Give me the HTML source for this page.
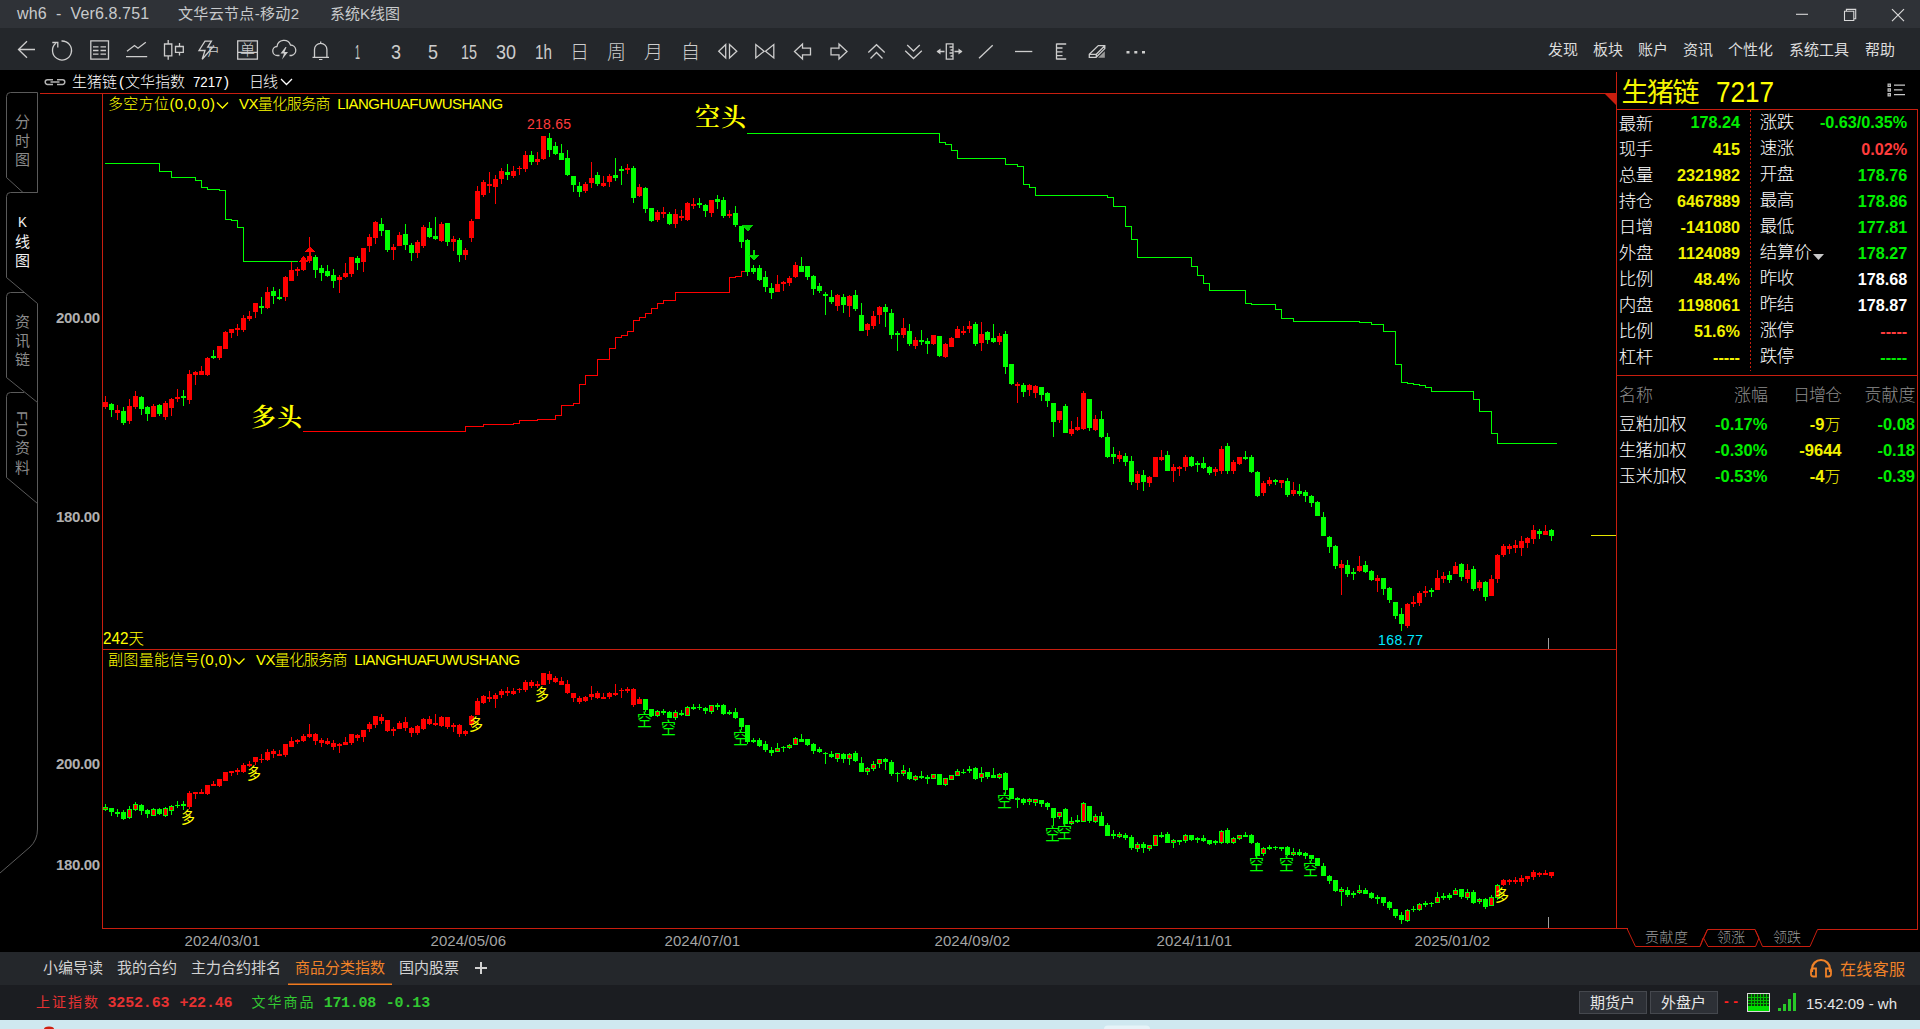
<!DOCTYPE html>
<html lang="zh-CN"><head><meta charset="utf-8"><title>wh6 - 系统K线图</title>
<style>
html,body{margin:0;padding:0;background:#000;}
body{width:1920px;height:1029px;overflow:hidden;position:relative;font-family:"Liberation Sans","Noto Sans CJK SC",sans-serif;}
.t{position:absolute;white-space:pre;}
.b{position:absolute;}
svg{position:absolute;left:0;top:0;}
</style></head>
<body>
<div class="b" style="left:0;top:0;width:1920px;height:28px;background:#2f3237"></div>
<div class="b" style="left:0;top:28px;width:1920px;height:42px;background:#24272b"></div>
<div class="b" style="left:0;top:952px;width:1920px;height:33px;background:#24272b"></div>
<div class="b" style="left:0;top:985px;width:1920px;height:35px;background:#1b1d21"></div>
<div class="b" style="left:0;top:1020px;width:1920px;height:9px;background:#cfe8f0"></div>
<div class="b" style="left:1579px;top:991px;width:66px;height:21px;background:#2d3036;border:1px solid #45484e;box-sizing:content-box"></div>
<div class="b" style="left:1650px;top:991px;width:66px;height:21px;background:#2d3036;border:1px solid #45484e;box-sizing:content-box"></div>
<svg class="chart" width="1920" height="1029" viewBox="0 0 1920 1029" shape-rendering="crispEdges"><path d="M40 93.5H1617M102.5 93V928M102 649.5H1617M102 928.5H1627.5M1616.5 72V928" stroke="#c81e0f" stroke-width="1" fill="none"/><path d="M105 163.5H159.5V171.5H171.5V177.5H195.5V180.5H201.5V187.5H207.5V189.5H219.5V190.5H225.5V219.5H231.5V220.5H237.5V227.5H243.5V261.5H298" stroke="#00ff00" fill="none"/><path d="M303 431.5H465.5V426.5H483.5V424.5H513.5V423.5H519.5V420.5H537.5V419.5H555.5V415.5H561.5V405.5H573.5V403.5H579.5V384.5H585.5V375.5H597.5V359.5H609.5V348.5H615.5V337.5H621.5V335.5H627.5V331.5H633.5V320.5H639.5V317.5H645.5V313.5H651.5V308.5H657.5V303.5H663.5V300.5H675.5V292.5H729.5V277.5H735.5V276.5H741.5V271.5H747" stroke="#ff0000" fill="none"/><path d="M747 133.5H939.5V142.5H945.5V144.5H951.5V150.5H957.5V158.5H1005.5V164.5H1017.5V166.5H1023.5V184.5H1029.5V187.5H1035.5V195.5H1107.5V197.5H1113.5V206.5H1125.5V226.5H1131.5V239.5H1137.5V257.5H1191.5V266.5H1197.5V275.5H1203.5V283.5H1209.5V290.5H1245.5V303.5H1251.5V304.5H1275.5V309.5H1281.5V318.5H1293.5V321.5H1359.5V322.5H1371.5V324.5H1383.5V331.5H1395.5V364.5H1401.5V382.5H1407.5V383.5H1413.5V384.5H1419.5V385.5H1425.5V387.5H1431.5V391.5H1473.5V399.5H1479.5V411.5H1491.5V433.5H1497.5V443.5H1557" stroke="#00ff00" fill="none"/><path fill="#ff0000" d="M105 396h1V409h-1zM103 402h5V407h-5z"/><path fill="#00ff00" d="M111 403h1V417h-1zM109 404h5V410h-5z"/><path fill="#ff0000" d="M117 405h1V420h-1zM115 410h5V413h-5z"/><path fill="#00ff00" d="M123 407h1V425h-1zM121 411h5V423h-5z"/><path fill="#ff0000" d="M129 399h1V424h-1zM127 406h5V421h-5z"/><path fill="#ff0000" d="M135 391h1V409h-1zM133 396h5V407h-5z"/><path fill="#00ff00" d="M141 396h1V415h-1zM139 397h5V409h-5z"/><path fill="#00ff00" d="M147 406h1V421h-1zM145 407h5V414h-5z"/><path fill="#ff0000" d="M153 404h1V417h-1zM151 406h5V417h-5z"/><path fill="#00ff00" d="M159 404h1V416h-1zM157 405h5V414h-5z"/><path fill="#ff0000" d="M165 401h1V420h-1zM163 403h5V417h-5z"/><path fill="#ff0000" d="M171 398h1V416h-1zM169 399h5V408h-5z"/><path fill="#ff0000" d="M177 389h1V402h-1zM175 397h5V399h-5z"/><path fill="#00ff00" d="M183 390h1V406h-1zM181 396h5V398h-5z"/><path fill="#ff0000" d="M189 370h1V404h-1zM187 374h5V400h-5z"/><path fill="#ff0000" d="M195 371h1V385h-1zM193 372h5V375h-5z"/><path fill="#ff0000" d="M201 366h1V375h-1zM199 371h5V375h-5z"/><path fill="#ff0000" d="M207 357h1V376h-1zM205 358h5V375h-5z"/><path fill="#00ff00" d="M213 350h1V359h-1zM211 356h5V358h-5z"/><path fill="#ff0000" d="M219 346h1V360h-1zM217 346h5V358h-5z"/><path fill="#ff0000" d="M225 331h1V349h-1zM223 332h5V349h-5z"/><path fill="#ff0000" d="M231 329h1V338h-1zM229 329h5V333h-5z"/><path fill="#ff0000" d="M237 324h1V336h-1zM235 328h5V330h-5z"/><path fill="#ff0000" d="M243 315h1V332h-1zM241 318h5V330h-5z"/><path fill="#ff0000" d="M249 311h1V321h-1zM247 316h5V319h-5z"/><path fill="#ff0000" d="M255 303h1V318h-1zM253 303h5V312h-5z"/><path fill="#00ff00" d="M261 297h1V314h-1zM259 306h5V308h-5z"/><path fill="#ff0000" d="M267 287h1V309h-1zM265 292h5V308h-5z"/><path fill="#00ff00" d="M273 287h1V304h-1zM271 291h5V296h-5z"/><path fill="#00ff00" d="M279 289h1V300h-1zM277 297h5V299h-5z"/><path fill="#ff0000" d="M285 276h1V301h-1zM283 277h5V297h-5z"/><path fill="#ff0000" d="M291 262h1V281h-1zM289 270h5V281h-5z"/><path fill="#ff0000" d="M297 267h1V276h-1zM295 269h5V271h-5z"/><path fill="#ff0000" d="M303 256h1V271h-1zM301 260h5V270h-5z"/><path fill="#ff0000" d="M309 237h1V263h-1zM307 256h5V261h-5z"/><path fill="#00ff00" d="M315 255h1V278h-1zM313 257h5V270h-5z"/><path fill="#00ff00" d="M321 265h1V281h-1zM319 268h5V273h-5z"/><path fill="#00ff00" d="M327 265h1V277h-1zM325 271h5V276h-5z"/><path fill="#00ff00" d="M333 269h1V288h-1zM331 275h5V281h-5z"/><path fill="#ff0000" d="M339 275h1V293h-1zM337 277h5V280h-5z"/><path fill="#ff0000" d="M345 263h1V278h-1zM343 273h5V277h-5z"/><path fill="#ff0000" d="M351 257h1V277h-1zM349 257h5V274h-5z"/><path fill="#00ff00" d="M357 256h1V270h-1zM355 258h5V263h-5z"/><path fill="#ff0000" d="M363 248h1V272h-1zM361 248h5V262h-5z"/><path fill="#ff0000" d="M369 234h1V252h-1zM367 237h5V246h-5z"/><path fill="#ff0000" d="M375 221h1V244h-1zM373 222h5V238h-5z"/><path fill="#00ff00" d="M381 218h1V236h-1zM379 224h5V231h-5z"/><path fill="#00ff00" d="M387 230h1V252h-1zM385 230h5V250h-5z"/><path fill="#ff0000" d="M393 244h1V260h-1zM391 247h5V250h-5z"/><path fill="#ff0000" d="M399 232h1V246h-1zM397 235h5V246h-5z"/><path fill="#00ff00" d="M405 224h1V250h-1zM403 234h5V245h-5z"/><path fill="#00ff00" d="M411 243h1V261h-1zM409 245h5V253h-5z"/><path fill="#ff0000" d="M417 240h1V258h-1zM415 242h5V253h-5z"/><path fill="#ff0000" d="M423 225h1V248h-1zM421 227h5V246h-5z"/><path fill="#00ff00" d="M429 222h1V238h-1zM427 228h5V237h-5z"/><path fill="#00ff00" d="M435 217h1V240h-1zM433 236h5V239h-5z"/><path fill="#ff0000" d="M441 222h1V242h-1zM439 224h5V241h-5z"/><path fill="#00ff00" d="M447 223h1V246h-1zM445 223h5V242h-5z"/><path fill="#ff0000" d="M453 236h1V251h-1zM451 239h5V242h-5z"/><path fill="#00ff00" d="M459 238h1V262h-1zM457 240h5V255h-5z"/><path fill="#ff0000" d="M465 248h1V260h-1zM463 250h5V255h-5z"/><path fill="#ff0000" d="M471 219h1V242h-1zM469 221h5V238h-5z"/><path fill="#ff0000" d="M477 186h1V219h-1zM475 191h5V219h-5z"/><path fill="#ff0000" d="M483 180h1V197h-1zM481 182h5V195h-5z"/><path fill="#ff0000" d="M489 172h1V193h-1zM487 184h5V186h-5z"/><path fill="#ff0000" d="M495 175h1V204h-1zM493 179h5V187h-5z"/><path fill="#ff0000" d="M501 168h1V184h-1zM499 171h5V179h-5z"/><path fill="#00ff00" d="M507 164h1V180h-1zM505 172h5V175h-5z"/><path fill="#ff0000" d="M513 166h1V178h-1zM511 171h5V176h-5z"/><path fill="#ff0000" d="M519 166h1V175h-1zM517 168h5V169h-5z"/><path fill="#ff0000" d="M525 151h1V172h-1zM523 155h5V169h-5z"/><path fill="#00ff00" d="M531 151h1V165h-1zM529 155h5V162h-5z"/><path fill="#ff0000" d="M537 152h1V165h-1zM535 159h5V162h-5z"/><path fill="#ff0000" d="M543 136h1V160h-1zM541 136h5V159h-5z"/><path fill="#00ff00" d="M549 133h1V157h-1zM547 138h5V150h-5z"/><path fill="#00ff00" d="M555 142h1V155h-1zM553 146h5V154h-5z"/><path fill="#00ff00" d="M561 144h1V160h-1zM559 153h5V160h-5z"/><path fill="#00ff00" d="M567 150h1V176h-1zM565 158h5V175h-5z"/><path fill="#00ff00" d="M573 176h1V192h-1zM571 176h5V185h-5z"/><path fill="#00ff00" d="M579 182h1V197h-1zM577 186h5V192h-5z"/><path fill="#ff0000" d="M585 182h1V193h-1zM583 184h5V191h-5z"/><path fill="#ff0000" d="M591 162h1V188h-1zM589 178h5V183h-5z"/><path fill="#00ff00" d="M597 172h1V186h-1zM595 175h5V184h-5z"/><path fill="#ff0000" d="M603 176h1V187h-1zM601 183h5V186h-5z"/><path fill="#ff0000" d="M609 174h1V187h-1zM607 176h5V182h-5z"/><path fill="#00ff00" d="M615 158h1V181h-1zM613 175h5V178h-5z"/><path fill="#00ff00" d="M621 166h1V185h-1zM619 169h5V171h-5z"/><path fill="#ff0000" d="M627 164h1V174h-1zM625 168h5V170h-5z"/><path fill="#00ff00" d="M633 166h1V203h-1zM631 168h5V198h-5z"/><path fill="#ff0000" d="M639 184h1V197h-1zM637 187h5V196h-5z"/><path fill="#00ff00" d="M645 187h1V213h-1zM643 188h5V209h-5z"/><path fill="#00ff00" d="M651 208h1V222h-1zM649 208h5V221h-5z"/><path fill="#ff0000" d="M657 210h1V222h-1zM655 212h5V220h-5z"/><path fill="#ff0000" d="M663 207h1V218h-1zM661 212h5V214h-5z"/><path fill="#00ff00" d="M669 212h1V225h-1zM667 214h5V224h-5z"/><path fill="#ff0000" d="M675 209h1V228h-1zM673 214h5V224h-5z"/><path fill="#ff0000" d="M681 210h1V221h-1zM679 216h5V218h-5z"/><path fill="#ff0000" d="M687 202h1V221h-1zM685 203h5V220h-5z"/><path fill="#ff0000" d="M693 198h1V209h-1zM691 204h5V206h-5z"/><path fill="#00ff00" d="M699 198h1V208h-1zM697 203h5V205h-5z"/><path fill="#00ff00" d="M705 204h1V217h-1zM703 205h5V211h-5z"/><path fill="#ff0000" d="M711 200h1V217h-1zM709 200h5V213h-5z"/><path fill="#00ff00" d="M717 195h1V209h-1zM715 199h5V202h-5z"/><path fill="#00ff00" d="M723 197h1V218h-1zM721 200h5V216h-5z"/><path fill="#ff0000" d="M729 210h1V218h-1zM727 214h5V216h-5z"/><path fill="#00ff00" d="M735 206h1V227h-1zM733 213h5V225h-5z"/><path fill="#00ff00" d="M741 226h1V248h-1zM739 226h5V242h-5z"/><path fill="#00ff00" d="M747 239h1V276h-1zM745 240h5V272h-5z"/><path fill="#00ff00" d="M753 265h1V274h-1zM751 268h5V272h-5z"/><path fill="#00ff00" d="M759 265h1V281h-1zM757 268h5V280h-5z"/><path fill="#00ff00" d="M765 271h1V292h-1zM763 277h5V287h-5z"/><path fill="#00ff00" d="M771 283h1V299h-1zM769 288h5V293h-5z"/><path fill="#ff0000" d="M777 275h1V292h-1zM775 284h5V292h-5z"/><path fill="#ff0000" d="M783 281h1V291h-1zM781 282h5V284h-5z"/><path fill="#ff0000" d="M789 276h1V286h-1zM787 278h5V283h-5z"/><path fill="#ff0000" d="M795 262h1V278h-1zM793 265h5V277h-5z"/><path fill="#00ff00" d="M801 257h1V272h-1zM799 266h5V272h-5z"/><path fill="#00ff00" d="M807 266h1V280h-1zM805 266h5V277h-5z"/><path fill="#00ff00" d="M813 275h1V295h-1zM811 276h5V289h-5z"/><path fill="#00ff00" d="M819 283h1V293h-1zM817 286h5V291h-5z"/><path fill="#00ff00" d="M825 292h1V315h-1zM823 294h5V296h-5z"/><path fill="#00ff00" d="M831 290h1V304h-1zM829 297h5V302h-5z"/><path fill="#ff0000" d="M837 294h1V311h-1zM835 295h5V306h-5z"/><path fill="#00ff00" d="M843 294h1V313h-1zM841 297h5V305h-5z"/><path fill="#ff0000" d="M849 295h1V317h-1zM847 296h5V306h-5z"/><path fill="#00ff00" d="M855 290h1V311h-1zM853 295h5V309h-5z"/><path fill="#00ff00" d="M861 303h1V331h-1zM859 315h5V331h-5z"/><path fill="#ff0000" d="M867 323h1V336h-1zM865 324h5V330h-5z"/><path fill="#ff0000" d="M873 311h1V329h-1zM871 316h5V326h-5z"/><path fill="#ff0000" d="M879 306h1V324h-1zM877 307h5V315h-5z"/><path fill="#00ff00" d="M885 304h1V327h-1zM883 307h5V312h-5z"/><path fill="#00ff00" d="M891 309h1V339h-1zM889 313h5V335h-5z"/><path fill="#00ff00" d="M897 331h1V351h-1zM895 333h5V335h-5z"/><path fill="#ff0000" d="M903 318h1V338h-1zM901 328h5V335h-5z"/><path fill="#00ff00" d="M909 324h1V346h-1zM907 331h5V344h-5z"/><path fill="#ff0000" d="M915 337h1V349h-1zM913 340h5V346h-5z"/><path fill="#00ff00" d="M921 330h1V345h-1zM919 340h5V342h-5z"/><path fill="#00ff00" d="M927 338h1V354h-1zM925 341h5V344h-5z"/><path fill="#ff0000" d="M933 335h1V345h-1zM931 335h5V344h-5z"/><path fill="#00ff00" d="M939 336h1V357h-1zM937 336h5V356h-5z"/><path fill="#ff0000" d="M945 343h1V358h-1zM943 344h5V357h-5z"/><path fill="#ff0000" d="M951 337h1V347h-1zM949 338h5V347h-5z"/><path fill="#ff0000" d="M957 326h1V338h-1zM955 329h5V338h-5z"/><path fill="#ff0000" d="M963 326h1V335h-1zM961 331h5V333h-5z"/><path fill="#ff0000" d="M969 321h1V333h-1zM967 326h5V329h-5z"/><path fill="#00ff00" d="M975 322h1V346h-1zM973 324h5V344h-5z"/><path fill="#ff0000" d="M981 322h1V351h-1zM979 334h5V343h-5z"/><path fill="#00ff00" d="M987 331h1V344h-1zM985 332h5V340h-5z"/><path fill="#00ff00" d="M993 324h1V343h-1zM991 338h5V342h-5z"/><path fill="#ff0000" d="M999 333h1V345h-1zM997 336h5V342h-5z"/><path fill="#00ff00" d="M1005 331h1V374h-1zM1003 334h5V367h-5z"/><path fill="#00ff00" d="M1011 364h1V385h-1zM1009 364h5V384h-5z"/><path fill="#ff0000" d="M1017 382h1V403h-1zM1015 384h5V386h-5z"/><path fill="#00ff00" d="M1023 383h1V397h-1zM1021 385h5V392h-5z"/><path fill="#ff0000" d="M1029 384h1V396h-1zM1027 385h5V390h-5z"/><path fill="#ff0000" d="M1035 385h1V398h-1zM1033 386h5V393h-5z"/><path fill="#00ff00" d="M1041 387h1V401h-1zM1039 387h5V395h-5z"/><path fill="#00ff00" d="M1047 392h1V407h-1zM1045 393h5V401h-5z"/><path fill="#00ff00" d="M1053 403h1V437h-1zM1051 403h5V422h-5z"/><path fill="#ff0000" d="M1059 411h1V423h-1zM1057 411h5V420h-5z"/><path fill="#00ff00" d="M1065 404h1V433h-1zM1063 406h5V433h-5z"/><path fill="#ff0000" d="M1071 421h1V436h-1zM1069 429h5V434h-5z"/><path fill="#ff0000" d="M1077 417h1V431h-1zM1075 427h5V430h-5z"/><path fill="#ff0000" d="M1083 391h1V430h-1zM1081 393h5V429h-5z"/><path fill="#00ff00" d="M1089 399h1V431h-1zM1087 399h5V428h-5z"/><path fill="#ff0000" d="M1095 415h1V431h-1zM1093 419h5V430h-5z"/><path fill="#00ff00" d="M1101 411h1V438h-1zM1099 419h5V437h-5z"/><path fill="#00ff00" d="M1107 433h1V458h-1zM1105 437h5V457h-5z"/><path fill="#00ff00" d="M1113 447h1V464h-1zM1111 454h5V457h-5z"/><path fill="#ff0000" d="M1119 451h1V462h-1zM1117 455h5V459h-5z"/><path fill="#00ff00" d="M1125 453h1V466h-1zM1123 456h5V462h-5z"/><path fill="#00ff00" d="M1131 456h1V485h-1zM1129 461h5V482h-5z"/><path fill="#ff0000" d="M1137 471h1V490h-1zM1135 474h5V483h-5z"/><path fill="#00ff00" d="M1143 470h1V491h-1zM1141 475h5V482h-5z"/><path fill="#ff0000" d="M1149 476h1V487h-1zM1147 477h5V483h-5z"/><path fill="#ff0000" d="M1155 457h1V477h-1zM1153 457h5V477h-5z"/><path fill="#ff0000" d="M1161 450h1V461h-1zM1159 457h5V460h-5z"/><path fill="#00ff00" d="M1167 451h1V471h-1zM1165 455h5V471h-5z"/><path fill="#ff0000" d="M1173 464h1V482h-1zM1171 467h5V471h-5z"/><path fill="#ff0000" d="M1179 466h1V476h-1zM1177 467h5V469h-5z"/><path fill="#ff0000" d="M1185 455h1V471h-1zM1183 457h5V467h-5z"/><path fill="#00ff00" d="M1191 456h1V467h-1zM1189 457h5V466h-5z"/><path fill="#00ff00" d="M1197 461h1V472h-1zM1195 463h5V465h-5z"/><path fill="#00ff00" d="M1203 457h1V469h-1zM1201 463h5V468h-5z"/><path fill="#00ff00" d="M1209 466h1V475h-1zM1207 467h5V473h-5z"/><path fill="#ff0000" d="M1215 467h1V476h-1zM1213 469h5V472h-5z"/><path fill="#ff0000" d="M1221 446h1V474h-1zM1219 449h5V471h-5z"/><path fill="#00ff00" d="M1227 443h1V474h-1zM1225 446h5V471h-5z"/><path fill="#ff0000" d="M1233 460h1V474h-1zM1231 462h5V471h-5z"/><path fill="#ff0000" d="M1239 457h1V465h-1zM1237 457h5V464h-5z"/><path fill="#00ff00" d="M1245 451h1V460h-1zM1243 457h5V459h-5z"/><path fill="#00ff00" d="M1251 455h1V473h-1zM1249 457h5V472h-5z"/><path fill="#00ff00" d="M1257 471h1V497h-1zM1255 472h5V496h-5z"/><path fill="#ff0000" d="M1263 481h1V496h-1zM1261 483h5V493h-5z"/><path fill="#ff0000" d="M1269 477h1V486h-1zM1267 480h5V484h-5z"/><path fill="#00ff00" d="M1275 479h1V485h-1zM1273 480h5V482h-5z"/><path fill="#ff0000" d="M1281 480h1V488h-1zM1279 480h5V483h-5z"/><path fill="#00ff00" d="M1287 478h1V497h-1zM1285 481h5V495h-5z"/><path fill="#ff0000" d="M1293 482h1V496h-1zM1291 490h5V494h-5z"/><path fill="#00ff00" d="M1299 484h1V496h-1zM1297 491h5V494h-5z"/><path fill="#00ff00" d="M1305 490h1V502h-1zM1303 492h5V496h-5z"/><path fill="#00ff00" d="M1311 495h1V507h-1zM1309 496h5V503h-5z"/><path fill="#00ff00" d="M1317 501h1V516h-1zM1315 502h5V516h-5z"/><path fill="#00ff00" d="M1323 512h1V536h-1zM1321 517h5V536h-5z"/><path fill="#00ff00" d="M1329 536h1V553h-1zM1327 537h5V547h-5z"/><path fill="#00ff00" d="M1335 545h1V569h-1zM1333 546h5V566h-5z"/><path fill="#ff0000" d="M1341 560h1V595h-1zM1339 564h5V568h-5z"/><path fill="#00ff00" d="M1347 560h1V577h-1zM1345 565h5V574h-5z"/><path fill="#00ff00" d="M1353 568h1V580h-1zM1351 572h5V574h-5z"/><path fill="#ff0000" d="M1359 556h1V572h-1zM1357 566h5V571h-5z"/><path fill="#00ff00" d="M1365 561h1V573h-1zM1363 565h5V572h-5z"/><path fill="#00ff00" d="M1371 570h1V581h-1zM1369 571h5V580h-5z"/><path fill="#ff0000" d="M1377 575h1V592h-1zM1375 578h5V581h-5z"/><path fill="#00ff00" d="M1383 578h1V595h-1zM1381 578h5V589h-5z"/><path fill="#00ff00" d="M1389 587h1V603h-1zM1387 588h5V600h-5z"/><path fill="#00ff00" d="M1395 602h1V619h-1zM1393 602h5V616h-5z"/><path fill="#00ff00" d="M1401 608h1V631h-1zM1399 614h5V624h-5z"/><path fill="#ff0000" d="M1407 603h1V628h-1zM1405 604h5V626h-5z"/><path fill="#ff0000" d="M1413 596h1V607h-1zM1411 602h5V604h-5z"/><path fill="#ff0000" d="M1419 591h1V606h-1zM1417 593h5V603h-5z"/><path fill="#ff0000" d="M1425 586h1V597h-1zM1423 591h5V593h-5z"/><path fill="#00ff00" d="M1431 588h1V597h-1zM1429 590h5V592h-5z"/><path fill="#ff0000" d="M1437 570h1V590h-1zM1435 578h5V590h-5z"/><path fill="#ff0000" d="M1443 572h1V583h-1zM1441 576h5V579h-5z"/><path fill="#00ff00" d="M1449 571h1V583h-1zM1447 575h5V580h-5z"/><path fill="#ff0000" d="M1455 562h1V574h-1zM1453 566h5V574h-5z"/><path fill="#00ff00" d="M1461 563h1V581h-1zM1459 564h5V577h-5z"/><path fill="#ff0000" d="M1467 564h1V583h-1zM1465 570h5V579h-5z"/><path fill="#00ff00" d="M1473 566h1V591h-1zM1471 569h5V589h-5z"/><path fill="#ff0000" d="M1479 580h1V591h-1zM1477 582h5V588h-5z"/><path fill="#00ff00" d="M1485 581h1V601h-1zM1483 582h5V597h-5z"/><path fill="#ff0000" d="M1491 575h1V596h-1zM1489 579h5V596h-5z"/><path fill="#ff0000" d="M1497 554h1V583h-1zM1495 555h5V579h-5z"/><path fill="#ff0000" d="M1503 544h1V557h-1zM1501 546h5V555h-5z"/><path fill="#ff0000" d="M1509 544h1V554h-1zM1507 546h5V549h-5z"/><path fill="#ff0000" d="M1515 540h1V553h-1zM1513 545h5V548h-5z"/><path fill="#ff0000" d="M1521 536h1V556h-1zM1519 541h5V548h-5z"/><path fill="#ff0000" d="M1527 537h1V548h-1zM1525 538h5V543h-5z"/><path fill="#ff0000" d="M1533 525h1V544h-1zM1531 530h5V539h-5z"/><path fill="#00ff00" d="M1539 529h1V539h-1zM1537 531h5V534h-5z"/><path fill="#ff0000" d="M1545 525h1V535h-1zM1543 531h5V535h-5z"/><path fill="#00ff00" d="M1551 529h1V541h-1zM1549 530h5V536h-5z"/><path fill="#00ff00" d="M105 804h1V811h-1zM103 807h5V810h-5z"/><path fill="#ff0000" d="M104 808h3V809h-3z"/><path fill="#00ff00" d="M111 808h1V816h-1zM109 808h5V812h-5z"/><path fill="#00ff00" d="M117 809h1V817h-1zM115 812h5V814h-5z"/><path fill="#00ff00" d="M123 810h1V820h-1zM121 812h5V819h-5z"/><path fill="#00ff00" d="M129 806h1V819h-1zM127 809h5V818h-5z"/><path fill="#ff0000" d="M128 810h3V817h-3z"/><path fill="#00ff00" d="M135 802h1V811h-1zM133 804h5V810h-5z"/><path fill="#ff0000" d="M134 805h3V809h-3z"/><path fill="#00ff00" d="M141 804h1V815h-1zM139 805h5V811h-5z"/><path fill="#00ff00" d="M147 809h1V818h-1zM145 810h5V814h-5z"/><path fill="#00ff00" d="M153 808h1V816h-1zM151 809h5V816h-5z"/><path fill="#ff0000" d="M152 810h3V815h-3z"/><path fill="#00ff00" d="M159 808h1V815h-1zM157 809h5V814h-5z"/><path fill="#00ff00" d="M165 807h1V817h-1zM163 808h5V816h-5z"/><path fill="#ff0000" d="M164 809h3V815h-3z"/><path fill="#00ff00" d="M171 805h1V815h-1zM169 806h5V811h-5z"/><path fill="#ff0000" d="M170 807h3V810h-3z"/><path fill="#00ff00" d="M177 801h1V808h-1zM175 805h5V806h-5z"/><path fill="#00ff00" d="M183 801h1V810h-1zM181 804h5V806h-5z"/><path fill="#ff0000" d="M189 791h1V809h-1zM187 793h5V807h-5z"/><path fill="#ff0000" d="M195 792h1V799h-1zM193 792h5V794h-5z"/><path fill="#ff0000" d="M201 789h1V794h-1zM199 792h5V794h-5z"/><path fill="#ff0000" d="M207 785h1V795h-1zM205 785h5V794h-5z"/><path fill="#ff0000" d="M213 781h1V786h-1zM211 784h5V786h-5z"/><path fill="#ff0000" d="M219 779h1V787h-1zM217 779h5V786h-5z"/><path fill="#ff0000" d="M225 772h1V781h-1zM223 772h5V781h-5z"/><path fill="#ff0000" d="M231 771h1V776h-1zM229 771h5V773h-5z"/><path fill="#ff0000" d="M237 768h1V775h-1zM235 770h5V772h-5z"/><path fill="#ff0000" d="M243 763h1V773h-1zM241 765h5V772h-5z"/><path fill="#ff0000" d="M249 761h1V767h-1zM247 764h5V766h-5z"/><path fill="#ff0000" d="M255 757h1V765h-1zM253 757h5V762h-5z"/><path fill="#ff0000" d="M261 754h1V763h-1zM259 759h5V760h-5z"/><path fill="#ff0000" d="M267 749h1V761h-1zM265 752h5V760h-5z"/><path fill="#ff0000" d="M273 749h1V758h-1zM271 751h5V754h-5z"/><path fill="#ff0000" d="M279 750h1V756h-1zM277 754h5V756h-5z"/><path fill="#ff0000" d="M285 744h1V757h-1zM283 744h5V755h-5z"/><path fill="#ff0000" d="M291 737h1V747h-1zM289 741h5V747h-5z"/><path fill="#ff0000" d="M297 739h1V744h-1zM295 740h5V742h-5z"/><path fill="#ff0000" d="M303 734h1V742h-1zM301 736h5V741h-5z"/><path fill="#ff0000" d="M309 724h1V738h-1zM307 734h5V737h-5z"/><path fill="#ff0000" d="M315 733h1V745h-1zM313 734h5V741h-5z"/><path fill="#ff0000" d="M321 738h1V747h-1zM319 740h5V743h-5z"/><path fill="#ff0000" d="M327 738h1V745h-1zM325 741h5V744h-5z"/><path fill="#ff0000" d="M333 740h1V750h-1zM331 743h5V747h-5z"/><path fill="#ff0000" d="M339 743h1V753h-1zM337 744h5V746h-5z"/><path fill="#ff0000" d="M345 737h1V745h-1zM343 742h5V745h-5z"/><path fill="#ff0000" d="M351 734h1V745h-1zM349 734h5V743h-5z"/><path fill="#ff0000" d="M357 734h1V741h-1zM355 735h5V738h-5z"/><path fill="#ff0000" d="M363 730h1V742h-1zM361 730h5V737h-5z"/><path fill="#ff0000" d="M369 722h1V732h-1zM367 724h5V729h-5z"/><path fill="#ff0000" d="M375 716h1V728h-1zM373 716h5V725h-5z"/><path fill="#ff0000" d="M381 714h1V724h-1zM379 717h5V721h-5z"/><path fill="#ff0000" d="M387 720h1V732h-1zM385 720h5V731h-5z"/><path fill="#ff0000" d="M393 727h1V736h-1zM391 729h5V731h-5z"/><path fill="#ff0000" d="M399 721h1V729h-1zM397 723h5V729h-5z"/><path fill="#ff0000" d="M405 717h1V731h-1zM403 722h5V728h-5z"/><path fill="#ff0000" d="M411 727h1V737h-1zM409 728h5V733h-5z"/><path fill="#ff0000" d="M417 725h1V735h-1zM415 726h5V733h-5z"/><path fill="#ff0000" d="M423 718h1V730h-1zM421 719h5V729h-5z"/><path fill="#ff0000" d="M429 716h1V725h-1zM427 719h5V724h-5z"/><path fill="#ff0000" d="M435 714h1V726h-1zM433 723h5V725h-5z"/><path fill="#ff0000" d="M441 716h1V727h-1zM439 717h5V726h-5z"/><path fill="#ff0000" d="M447 717h1V729h-1zM445 717h5V727h-5z"/><path fill="#ff0000" d="M453 723h1V732h-1zM451 725h5V727h-5z"/><path fill="#ff0000" d="M459 724h1V737h-1zM457 725h5V734h-5z"/><path fill="#ff0000" d="M465 730h1V736h-1zM463 731h5V734h-5z"/><path fill="#ff0000" d="M471 715h1V727h-1zM469 716h5V725h-5z"/><path fill="#ff0000" d="M477 698h1V715h-1zM475 701h5V715h-5z"/><path fill="#ff0000" d="M483 695h1V704h-1zM481 696h5V703h-5z"/><path fill="#ff0000" d="M489 691h1V702h-1zM487 697h5V699h-5z"/><path fill="#ff0000" d="M495 693h1V708h-1zM493 695h5V699h-5z"/><path fill="#ff0000" d="M501 689h1V698h-1zM499 691h5V695h-5z"/><path fill="#ff0000" d="M507 687h1V696h-1zM505 691h5V693h-5z"/><path fill="#ff0000" d="M513 688h1V695h-1zM511 691h5V694h-5z"/><path fill="#ff0000" d="M519 688h1V693h-1zM517 689h5V690h-5z"/><path fill="#ff0000" d="M525 680h1V692h-1zM523 682h5V690h-5z"/><path fill="#ff0000" d="M531 680h1V688h-1zM529 682h5V686h-5z"/><path fill="#ff0000" d="M537 681h1V688h-1zM535 684h5V686h-5z"/><path fill="#ff0000" d="M543 673h1V685h-1zM541 673h5V685h-5z"/><path fill="#ff0000" d="M549 671h1V684h-1zM547 674h5V680h-5z"/><path fill="#ff0000" d="M555 676h1V683h-1zM553 678h5V682h-5z"/><path fill="#ff0000" d="M561 677h1V685h-1zM559 681h5V685h-5z"/><path fill="#ff0000" d="M567 680h1V694h-1zM565 684h5V693h-5z"/><path fill="#ff0000" d="M573 693h1V702h-1zM571 693h5V698h-5z"/><path fill="#ff0000" d="M579 696h1V704h-1zM577 698h5V702h-5z"/><path fill="#ff0000" d="M585 696h1V702h-1zM583 697h5V701h-5z"/><path fill="#ff0000" d="M591 686h1V700h-1zM589 694h5V697h-5z"/><path fill="#ff0000" d="M597 691h1V699h-1zM595 693h5V698h-5z"/><path fill="#ff0000" d="M603 693h1V699h-1zM601 697h5V699h-5z"/><path fill="#ff0000" d="M609 692h1V699h-1zM607 693h5V697h-5z"/><path fill="#ff0000" d="M615 684h1V696h-1zM613 693h5V695h-5z"/><path fill="#ff0000" d="M621 688h1V698h-1zM619 690h5V691h-5z"/><path fill="#ff0000" d="M627 687h1V693h-1zM625 689h5V691h-5z"/><path fill="#ff0000" d="M633 688h1V707h-1zM631 689h5V705h-5z"/><path fill="#ff0000" d="M639 697h1V704h-1zM637 699h5V704h-5z"/><path fill="#00ff00" d="M645 699h1V712h-1zM643 699h5V710h-5z"/><path fill="#00ff00" d="M651 709h1V717h-1zM649 709h5V716h-5z"/><path fill="#00ff00" d="M657 710h1V717h-1zM655 711h5V716h-5z"/><path fill="#ff0000" d="M656 712h3V715h-3z"/><path fill="#00ff00" d="M663 709h1V715h-1zM661 711h5V713h-5z"/><path fill="#00ff00" d="M669 711h1V718h-1zM667 712h5V718h-5z"/><path fill="#00ff00" d="M675 710h1V720h-1zM673 712h5V718h-5z"/><path fill="#ff0000" d="M674 713h3V717h-3z"/><path fill="#00ff00" d="M681 710h1V716h-1zM679 713h5V715h-5z"/><path fill="#00ff00" d="M687 706h1V716h-1zM685 707h5V716h-5z"/><path fill="#ff0000" d="M686 708h3V715h-3z"/><path fill="#00ff00" d="M693 704h1V710h-1zM691 707h5V709h-5z"/><path fill="#00ff00" d="M699 704h1V710h-1zM697 707h5V708h-5z"/><path fill="#00ff00" d="M705 707h1V714h-1zM703 708h5V711h-5z"/><path fill="#00ff00" d="M711 705h1V714h-1zM709 705h5V712h-5z"/><path fill="#ff0000" d="M710 706h3V711h-3z"/><path fill="#00ff00" d="M717 703h1V710h-1zM715 705h5V707h-5z"/><path fill="#00ff00" d="M723 704h1V715h-1zM721 705h5V714h-5z"/><path fill="#00ff00" d="M729 710h1V715h-1zM727 712h5V714h-5z"/><path fill="#00ff00" d="M735 708h1V719h-1zM733 712h5V718h-5z"/><path fill="#00ff00" d="M741 718h1V730h-1zM739 718h5V727h-5z"/><path fill="#00ff00" d="M747 725h1V744h-1zM745 725h5V742h-5z"/><path fill="#00ff00" d="M753 738h1V743h-1zM751 740h5V742h-5z"/><path fill="#00ff00" d="M759 738h1V747h-1zM757 740h5V746h-5z"/><path fill="#00ff00" d="M765 741h1V752h-1zM763 744h5V750h-5z"/><path fill="#00ff00" d="M771 747h1V756h-1zM769 750h5V753h-5z"/><path fill="#00ff00" d="M777 743h1V752h-1zM775 748h5V752h-5z"/><path fill="#ff0000" d="M776 749h3V751h-3z"/><path fill="#00ff00" d="M783 746h1V752h-1zM781 747h5V748h-5z"/><path fill="#00ff00" d="M789 744h1V749h-1zM787 745h5V748h-5z"/><path fill="#ff0000" d="M788 746h3V747h-3z"/><path fill="#00ff00" d="M795 737h1V745h-1zM793 738h5V745h-5z"/><path fill="#ff0000" d="M794 739h3V744h-3z"/><path fill="#00ff00" d="M801 734h1V742h-1zM799 739h5V742h-5z"/><path fill="#00ff00" d="M807 739h1V746h-1zM805 739h5V745h-5z"/><path fill="#00ff00" d="M813 743h1V754h-1zM811 744h5V751h-5z"/><path fill="#00ff00" d="M819 747h1V753h-1zM817 749h5V752h-5z"/><path fill="#00ff00" d="M825 752h1V764h-1zM823 753h5V754h-5z"/><path fill="#00ff00" d="M831 751h1V758h-1zM829 754h5V757h-5z"/><path fill="#00ff00" d="M837 753h1V762h-1zM835 753h5V759h-5z"/><path fill="#ff0000" d="M836 754h3V758h-3z"/><path fill="#00ff00" d="M843 753h1V763h-1zM841 754h5V759h-5z"/><path fill="#00ff00" d="M849 753h1V765h-1zM847 754h5V759h-5z"/><path fill="#ff0000" d="M848 755h3V758h-3z"/><path fill="#00ff00" d="M855 751h1V762h-1zM853 753h5V761h-5z"/><path fill="#00ff00" d="M861 757h1V772h-1zM859 763h5V772h-5z"/><path fill="#00ff00" d="M867 767h1V775h-1zM865 768h5V772h-5z"/><path fill="#ff0000" d="M866 769h3V771h-3z"/><path fill="#00ff00" d="M873 761h1V771h-1zM871 764h5V769h-5z"/><path fill="#ff0000" d="M872 765h3V768h-3z"/><path fill="#00ff00" d="M879 759h1V768h-1zM877 759h5V764h-5z"/><path fill="#ff0000" d="M878 760h3V763h-3z"/><path fill="#00ff00" d="M885 758h1V770h-1zM883 759h5V762h-5z"/><path fill="#00ff00" d="M891 760h1V776h-1zM889 762h5V774h-5z"/><path fill="#00ff00" d="M897 772h1V782h-1zM895 773h5V774h-5z"/><path fill="#00ff00" d="M903 765h1V776h-1zM901 770h5V774h-5z"/><path fill="#ff0000" d="M902 771h3V773h-3z"/><path fill="#00ff00" d="M909 768h1V780h-1zM907 772h5V779h-5z"/><path fill="#00ff00" d="M915 775h1V781h-1zM913 776h5V780h-5z"/><path fill="#ff0000" d="M914 777h3V779h-3z"/><path fill="#00ff00" d="M921 771h1V779h-1zM919 776h5V778h-5z"/><path fill="#00ff00" d="M927 775h1V784h-1zM925 777h5V779h-5z"/><path fill="#00ff00" d="M933 774h1V779h-1zM931 774h5V779h-5z"/><path fill="#ff0000" d="M932 775h3V778h-3z"/><path fill="#00ff00" d="M939 774h1V785h-1zM937 774h5V785h-5z"/><path fill="#00ff00" d="M945 778h1V786h-1zM943 778h5V785h-5z"/><path fill="#ff0000" d="M944 779h3V784h-3z"/><path fill="#00ff00" d="M951 775h1V780h-1zM949 775h5V780h-5z"/><path fill="#ff0000" d="M950 776h3V779h-3z"/><path fill="#00ff00" d="M957 769h1V776h-1zM955 771h5V776h-5z"/><path fill="#ff0000" d="M956 772h3V775h-3z"/><path fill="#00ff00" d="M963 769h1V774h-1zM961 772h5V773h-5z"/><path fill="#00ff00" d="M969 766h1V773h-1zM967 769h5V771h-5z"/><path fill="#00ff00" d="M975 767h1V780h-1zM973 768h5V779h-5z"/><path fill="#00ff00" d="M981 767h1V782h-1zM979 773h5V778h-5z"/><path fill="#ff0000" d="M980 774h3V777h-3z"/><path fill="#00ff00" d="M987 772h1V779h-1zM985 772h5V777h-5z"/><path fill="#00ff00" d="M993 768h1V778h-1zM991 775h5V778h-5z"/><path fill="#00ff00" d="M999 773h1V779h-1zM997 774h5V778h-5z"/><path fill="#ff0000" d="M998 775h3V777h-3z"/><path fill="#00ff00" d="M1005 772h1V794h-1zM1003 773h5V790h-5z"/><path fill="#00ff00" d="M1011 788h1V799h-1zM1009 788h5V799h-5z"/><path fill="#00ff00" d="M1017 797h1V808h-1zM1015 798h5V800h-5z"/><path fill="#00ff00" d="M1023 798h1V805h-1zM1021 799h5V803h-5z"/><path fill="#00ff00" d="M1029 798h1V805h-1zM1027 799h5V802h-5z"/><path fill="#ff0000" d="M1028 800h3V801h-3z"/><path fill="#00ff00" d="M1035 799h1V806h-1zM1033 799h5V803h-5z"/><path fill="#ff0000" d="M1034 800h3V802h-3z"/><path fill="#00ff00" d="M1041 800h1V807h-1zM1039 800h5V804h-5z"/><path fill="#00ff00" d="M1047 802h1V810h-1zM1045 803h5V807h-5z"/><path fill="#00ff00" d="M1053 808h1V826h-1zM1051 808h5V818h-5z"/><path fill="#00ff00" d="M1059 812h1V819h-1zM1057 812h5V817h-5z"/><path fill="#ff0000" d="M1058 813h3V816h-3z"/><path fill="#00ff00" d="M1065 808h1V824h-1zM1063 809h5V824h-5z"/><path fill="#00ff00" d="M1071 817h1V825h-1zM1069 821h5V824h-5z"/><path fill="#ff0000" d="M1070 822h3V823h-3z"/><path fill="#00ff00" d="M1077 815h1V823h-1zM1075 820h5V822h-5z"/><path fill="#00ff00" d="M1083 802h1V822h-1zM1081 803h5V822h-5z"/><path fill="#ff0000" d="M1082 804h3V821h-3z"/><path fill="#00ff00" d="M1089 806h1V823h-1zM1087 806h5V821h-5z"/><path fill="#00ff00" d="M1095 814h1V823h-1zM1093 816h5V822h-5z"/><path fill="#ff0000" d="M1094 817h3V821h-3z"/><path fill="#00ff00" d="M1101 812h1V826h-1zM1099 816h5V826h-5z"/><path fill="#00ff00" d="M1107 823h1V836h-1zM1105 825h5V836h-5z"/><path fill="#00ff00" d="M1113 830h1V839h-1zM1111 834h5V836h-5z"/><path fill="#00ff00" d="M1119 832h1V838h-1zM1117 834h5V837h-5z"/><path fill="#ff0000" d="M1118 835h3V836h-3z"/><path fill="#00ff00" d="M1125 833h1V840h-1zM1123 835h5V838h-5z"/><path fill="#00ff00" d="M1131 835h1V850h-1zM1129 837h5V848h-5z"/><path fill="#00ff00" d="M1137 842h1V852h-1zM1135 844h5V849h-5z"/><path fill="#ff0000" d="M1136 845h3V848h-3z"/><path fill="#00ff00" d="M1143 842h1V853h-1zM1141 844h5V848h-5z"/><path fill="#00ff00" d="M1149 845h1V851h-1zM1147 845h5V849h-5z"/><path fill="#ff0000" d="M1148 846h3V848h-3z"/><path fill="#00ff00" d="M1155 835h1V846h-1zM1153 835h5V846h-5z"/><path fill="#ff0000" d="M1154 836h3V845h-3z"/><path fill="#00ff00" d="M1161 832h1V838h-1zM1159 835h5V837h-5z"/><path fill="#00ff00" d="M1167 832h1V843h-1zM1165 834h5V843h-5z"/><path fill="#00ff00" d="M1173 839h1V848h-1zM1171 840h5V843h-5z"/><path fill="#ff0000" d="M1172 841h3V842h-3z"/><path fill="#00ff00" d="M1179 840h1V845h-1zM1177 840h5V842h-5z"/><path fill="#00ff00" d="M1185 834h1V843h-1zM1183 835h5V841h-5z"/><path fill="#ff0000" d="M1184 836h3V840h-3z"/><path fill="#00ff00" d="M1191 835h1V841h-1zM1189 835h5V840h-5z"/><path fill="#00ff00" d="M1197 837h1V843h-1zM1195 838h5V840h-5z"/><path fill="#00ff00" d="M1203 835h1V842h-1zM1201 838h5V841h-5z"/><path fill="#00ff00" d="M1209 840h1V845h-1zM1207 840h5V844h-5z"/><path fill="#00ff00" d="M1215 840h1V845h-1zM1213 841h5V843h-5z"/><path fill="#00ff00" d="M1221 830h1V844h-1zM1219 831h5V843h-5z"/><path fill="#ff0000" d="M1220 832h3V842h-3z"/><path fill="#00ff00" d="M1227 828h1V844h-1zM1225 830h5V843h-5z"/><path fill="#00ff00" d="M1233 837h1V844h-1zM1231 838h5V843h-5z"/><path fill="#ff0000" d="M1232 839h3V842h-3z"/><path fill="#00ff00" d="M1239 835h1V840h-1zM1237 835h5V839h-5z"/><path fill="#ff0000" d="M1238 836h3V838h-3z"/><path fill="#00ff00" d="M1245 832h1V837h-1zM1243 835h5V837h-5z"/><path fill="#00ff00" d="M1251 834h1V844h-1zM1249 835h5V843h-5z"/><path fill="#00ff00" d="M1257 842h1V856h-1zM1255 843h5V856h-5z"/><path fill="#00ff00" d="M1263 847h1V856h-1zM1261 848h5V854h-5z"/><path fill="#ff0000" d="M1262 849h3V853h-3z"/><path fill="#00ff00" d="M1269 845h1V850h-1zM1267 847h5V849h-5z"/><path fill="#00ff00" d="M1275 846h1V850h-1zM1273 847h5V848h-5z"/><path fill="#00ff00" d="M1281 847h1V851h-1zM1279 847h5V849h-5z"/><path fill="#00ff00" d="M1287 846h1V856h-1zM1285 847h5V855h-5z"/><path fill="#00ff00" d="M1293 848h1V856h-1zM1291 852h5V855h-5z"/><path fill="#ff0000" d="M1292 853h3V854h-3z"/><path fill="#00ff00" d="M1299 849h1V856h-1zM1297 852h5V855h-5z"/><path fill="#00ff00" d="M1305 852h1V859h-1zM1303 853h5V856h-5z"/><path fill="#00ff00" d="M1311 855h1V861h-1zM1309 855h5V859h-5z"/><path fill="#00ff00" d="M1317 858h1V866h-1zM1315 858h5V866h-5z"/><path fill="#00ff00" d="M1323 863h1V876h-1zM1321 866h5V876h-5z"/><path fill="#00ff00" d="M1329 875h1V884h-1zM1327 876h5V881h-5z"/><path fill="#00ff00" d="M1335 880h1V892h-1zM1333 880h5V891h-5z"/><path fill="#00ff00" d="M1341 887h1V906h-1zM1339 889h5V892h-5z"/><path fill="#ff0000" d="M1340 890h3V891h-3z"/><path fill="#00ff00" d="M1347 887h1V897h-1zM1345 890h5V895h-5z"/><path fill="#00ff00" d="M1353 891h1V898h-1zM1351 893h5V895h-5z"/><path fill="#00ff00" d="M1359 885h1V894h-1zM1357 890h5V893h-5z"/><path fill="#ff0000" d="M1358 891h3V892h-3z"/><path fill="#00ff00" d="M1365 888h1V894h-1zM1363 890h5V894h-5z"/><path fill="#00ff00" d="M1371 892h1V899h-1zM1369 893h5V898h-5z"/><path fill="#00ff00" d="M1377 895h1V904h-1zM1375 897h5V899h-5z"/><path fill="#00ff00" d="M1383 897h1V906h-1zM1381 897h5V903h-5z"/><path fill="#00ff00" d="M1389 901h1V910h-1zM1387 902h5V908h-5z"/><path fill="#00ff00" d="M1395 909h1V918h-1zM1393 909h5V916h-5z"/><path fill="#00ff00" d="M1401 912h1V924h-1zM1399 915h5V920h-5z"/><path fill="#00ff00" d="M1407 909h1V922h-1zM1405 910h5V921h-5z"/><path fill="#ff0000" d="M1406 911h3V920h-3z"/><path fill="#00ff00" d="M1413 906h1V912h-1zM1411 909h5V910h-5z"/><path fill="#00ff00" d="M1419 903h1V911h-1zM1417 904h5V910h-5z"/><path fill="#ff0000" d="M1418 905h3V909h-3z"/><path fill="#00ff00" d="M1425 901h1V907h-1zM1423 903h5V905h-5z"/><path fill="#00ff00" d="M1431 902h1V907h-1zM1429 903h5V904h-5z"/><path fill="#00ff00" d="M1437 892h1V903h-1zM1435 897h5V903h-5z"/><path fill="#ff0000" d="M1436 898h3V902h-3z"/><path fill="#00ff00" d="M1443 893h1V900h-1zM1441 896h5V898h-5z"/><path fill="#00ff00" d="M1449 893h1V900h-1zM1447 895h5V898h-5z"/><path fill="#00ff00" d="M1455 888h1V895h-1zM1453 890h5V895h-5z"/><path fill="#ff0000" d="M1454 891h3V894h-3z"/><path fill="#00ff00" d="M1461 889h1V899h-1zM1459 889h5V897h-5z"/><path fill="#00ff00" d="M1467 889h1V900h-1zM1465 892h5V898h-5z"/><path fill="#ff0000" d="M1466 893h3V897h-3z"/><path fill="#00ff00" d="M1473 890h1V904h-1zM1471 892h5V903h-5z"/><path fill="#00ff00" d="M1479 898h1V904h-1zM1477 899h5V902h-5z"/><path fill="#ff0000" d="M1478 900h3V901h-3z"/><path fill="#00ff00" d="M1485 898h1V909h-1zM1483 899h5V907h-5z"/><path fill="#00ff00" d="M1491 895h1V906h-1zM1489 897h5V906h-5z"/><path fill="#ff0000" d="M1490 898h3V905h-3z"/><path fill="#00ff00" d="M1497 884h1V900h-1zM1495 885h5V898h-5z"/><path fill="#ff0000" d="M1496 886h3V897h-3z"/><path fill="#ff0000" d="M1503 879h1V886h-1zM1501 880h5V885h-5z"/><path fill="#ff0000" d="M1509 879h1V885h-1zM1507 880h5V882h-5z"/><path fill="#ff0000" d="M1515 877h1V884h-1zM1513 880h5V882h-5z"/><path fill="#ff0000" d="M1521 875h1V886h-1zM1519 878h5V882h-5z"/><path fill="#ff0000" d="M1527 876h1V882h-1zM1525 876h5V879h-5z"/><path fill="#ff0000" d="M1533 870h1V880h-1zM1531 872h5V877h-5z"/><path fill="#ff0000" d="M1539 872h1V877h-1zM1537 873h5V875h-5z"/><path fill="#ff0000" d="M1545 870h1V875h-1zM1543 873h5V875h-5z"/><path fill="#ff0000" d="M1551 872h1V878h-1zM1549 872h5V876h-5z"/><path fill="#ff0000" d="M310 247l5.5 5h-4.5v4h-2v-4h-4.5z"/><path fill="#ff0000" d="M303.5 256l5 6h-10z"/><path fill="#00d200" d="M742 225h11.5l-5.7 6.5z"/><path fill="#00e000" d="M753 250h2v5h4.5l-5.5 5.5l-5.5-5.5h4.5z"/><path d="M1591 535.5H1616" stroke="#e6e600" fill="none"/><path d="M1548.5 638V649M1548.5 917V928" stroke="#a0a0a0" fill="none"/></svg>
<svg width="1920" height="1029" viewBox="0 0 1920 1029" fill="none" stroke-linecap="butt">
<path d="M1796 14.300h12" stroke="#d8d8d8" stroke-width="1.1"/>
<path d="M1844.500 11.200h9.300v9.300h-9.300zM1846.400 11.200v-1.800h9.300v9.300h-1.900" stroke="#d8d8d8" stroke-width="1.1"/>
<path d="M1892 9.200l12 12M1904 9.200l-12 12" stroke="#d8d8d8" stroke-width="1.2"/>
<path d="M37.5 192.5V92.5H10.5q-4 0 -4 4V177.5L23 192.5H37.5" stroke="#5a5a5a"/>
<path d="M37.5 192.5H10.5q-4 0 -4 4V277.5L37.5 303.5" stroke="#5a5a5a"/>
<path d="M24 292.5H10.5q-4 0 -4 4V377.5L37.5 402.5V303.5" stroke="#5a5a5a"/>
<path d="M24 392.5H10.5q-4 0 -4 4V477.5L37.5 503.5V402.5" stroke="#5a5a5a"/>
<path d="M37.5 503V829Q37.5 840 30 847L0 873" stroke="#5a5a5a"/>
<path d="M1616 109.5H1918M1917.5 109V929M1616 375.5H1918" stroke="#c81e0f" shape-rendering="crispEdges"/>
<path d="M1750.5 110V371" stroke="#c81e0f" stroke-dasharray="2 2" shape-rendering="crispEdges"/>
<path d="M1604 93h13v13z" fill="#c81e0f"/>
<path d="M1627 928.5L1635.5 946.5H1700L1707.5 929.5H1755L1762.5 946.5H1810L1817.5 929.5H1918" stroke="#c81e0f"/>
<path d="M1700 946.5L1703 938M1707.5 929.5L1703.5 938L1708 946.5H1755.5L1759 938M1755 929.5L1759 938" stroke="#c81e0f"/>
<path d="M281 79l5.5 5.5l5.5-5.5" stroke="#fff" stroke-width="1.3"/>
<path d="M217 102.5l5.5 5.5l5.5-5.5" stroke="#ffff00" stroke-width="1.3"/>
<path d="M233.5 658.5l5.5 5.5l5.5-5.5" stroke="#ffff00" stroke-width="1.3"/>
<path d="M53 79.800h-5.500a2.300 2.300 0 0 0 0 4.600h5.500M57 79.800h5.500a2.300 2.300 0 0 1 0 4.600h-5.500M50.500 82.100h9" stroke="#b4b4b4" stroke-width="1.500"/>
<path d="M1894 85.200h11M1894 89.900h8.500M1894 94.700h11" stroke="#c8c8c8" stroke-width="1.200"/><path d="M1887.500 83.500h3.500v3.500h-3.500zM1887.500 88.200h3.500v3.500h-3.500zM1887.500 93h3.500v3.500h-3.500z" fill="#c0c0c0" stroke="none"/><path d="M1888.700 84.700h1.100v1.100h-1.100zM1888.700 89.400h1.100v1.100h-1.100zM1888.700 94.200h1.100v1.100h-1.100z" fill="#303030" stroke="none"/>
<path d="M1813 254h11l-5.5 6z" fill="#c8c8c8"/>
<path d="M288 984.300h104" stroke="#f07a1e" stroke-width="1.400"/>
<path d="M475 968h12M481 962v12" stroke="#d2d2d2" stroke-width="2"/>
<path d="M1812 972v-3a9 9 0 0 1 18 0v3" stroke="#f08228" stroke-width="2.2"/><path d="M1816 968.5v8h-2.5a2.5 2.5 0 0 1 -2.5 -2.5v-3a2.5 2.5 0 0 1 2.500 -2.5zM1826 968.500v8h2.5a2.5 2.5 0 0 0 2.5 -2.5v-3a2.5 2.5 0 0 0 -2.5 -2.5z" stroke="#f08228" stroke-width="1.8"/>
<rect x="1747" y="993" width="23" height="19" fill="#d8d8d8"/><rect x="1748" y="994" width="21" height="17" fill="#0a3c0a"/><rect x="1748" y="1006" width="21" height="5" fill="#00e000"/>
<path d="M1751.500 994v12M1754.500 994v12M1757.500 994v12M1760.500 994v12M1763.500 994v12M1766.500 994v12M1748 997.500h21M1748 1000.500h21M1748 1003.500h21" stroke="#00c000" shape-rendering="crispEdges"/>
<path d="M1778 1008h3v3h-3zM1783 1004h3v7h-3zM1788 999h3v12h-3zM1793 993h3v18h-3z" fill="#28c828"/>
<path d="M44 1029q0 -2.500 5 -2.500t5 2.500z" fill="#d02010"/>
<path d="M1104 1029q0 -3.500 4 -3.500h38q4 0 4 3.500z" fill="#e6f3f8"/>
</svg><svg width="1920" height="1029" viewBox="0 0 1920 1029" fill="none" stroke="#cdcdcd" stroke-width="1.3">
<path d="M35 49.500H18.500M27 41.200L18.500 49.500L27 57.800"/>
<path d="M55.800 43.300A9.500 9.500 0 1 0 61.500 41"/><path d="M52.300 42.500h5.500v5"/>
<path d="M90.800 40.800h17.700v18.400h-17.700z"/><path d="M93 46.800h5.500M100.500 46.800h5.500M93 50.500h5.500M100.500 50.500h5.500M93 54.200h5.500M100.500 54.200h5.500"/>
<path d="M126 56.700h21.200M127 51.200L134.500 45.600L138 48.200L145.800 42.300"/>
<path d="M164.500 44h7.300v11.800h-7.300zM168.200 40v4M168.200 55.800v4M175.500 46.500h7.800v5.800h-7.800zM179.500 43v3.500M179.500 52.300v3.300"/>
<path d="M205 41.200h6.400l-3.700 6h5.100L202.200 59.200l2.800-8.700h-6z"/>
<path d="M237.700 40.800h19.700v18.400h-19.700zM237.700 52.400h19.700"/>
<path d="M279.500 55.500h-2a4.500 4.500 0 0 1 -0.500 -9a7 7 0 0 1 13.500 -1.500a5.300 5.300 0 0 1 1 10.500h-2"/><path d="M285.500 47l-5 6.500h3.500l-2 6l6-7.500h-3.500l2-5z" fill="#cdcdcd" stroke="none"/>
<path d="M312.500 57.300h16.500M314.500 57v-7.500a6.200 6.200 0 0 1 12.400 0V57M320.700 41.500v1.500"/><path d="M319 59h3.400v1h-3.400z" fill="#cdcdcd" stroke="none"/>
<path d="M725.700 44.500v13.500l-7-6.800zM729.500 44.500v13.500l7.300-6.800z"/>
<path d="M755.800 44.500v13.500l8.300-6.800zM773.800 44.500v13.500l-8.300-6.800z"/>
<path d="M794.500 51.500l8-7.500v4.200h8v6.600h-8v4.200z"/>
<path d="M847 51.500l-8-7.500v4.200h-8v6.600h8v4.200z"/>
<path d="M868.300 52.500l8.200-7.800l8.200 7.800M870.500 58.500l6-6l6 6"/>
<path d="M907.200 45l6.300 6l6.300-6M905.200 50.700l8.300 7.800l8.300-7.800"/>
<path d="M946.300 43.800h6.700v15.400h-6.700zM937.500 51.500h7M961.500 51.500h-7M949.500 47h3.500M950.500 50h2.500M949.500 53h3.500M950.500 56h2.500"/><path d="M936.500 51.500l4-3v6zM962.500 51.500l-4-3v6z" fill="#cdcdcd" stroke="none"/>
<path d="M979 58.300L992.700 45.200"/>
<path d="M1015 51.500h17.300"/>
<path d="M1056.500 43.500v16M1056.500 44h9.700M1056.500 48h6M1056.500 51.800h6M1056.500 55.600h6M1056.500 59h9.700"/>
<path d="M1089.300 57.300v-3l9-8.700h6.500v3l-8.700 8.700zM1089.300 54.300h7l8.500-8.500M1096.300 54.300v3"/><path d="M1098 57.800l6.800-6.500v6.500z" fill="#9a9a9a" stroke="none"/>
<path d="M1126.500 51h3v2.600h-3zM1134.300 51h3v2.600h-3zM1142 51h3v2.600h-3z" fill="#cdcdcd" stroke="none"/>
</svg>
<span class="t" style="top:3px;font-size:16px;line-height:22px;color:#c8cacc;letter-spacing:0.13px;left:17px;">wh6  -  Ver6.8.751</span>
<span class="t" style="top:2.5px;font-size:15px;line-height:21px;color:#c8cacc;letter-spacing:0.33px;left:178px;">文华云节点-移动2</span>
<span class="t" style="top:2.5px;font-size:15px;line-height:21px;color:#c8cacc;left:330px;">系统K线图</span>
<span class="t" style="top:38.5px;font-size:15px;line-height:21px;color:#dcdcdc;letter-spacing:-0.02px;left:1548px;">发现</span>
<span class="t" style="top:38.5px;font-size:15px;line-height:21px;color:#dcdcdc;letter-spacing:-0.02px;left:1593px;">板块</span>
<span class="t" style="top:38.5px;font-size:15px;line-height:21px;color:#dcdcdc;letter-spacing:-0.02px;left:1638px;">账户</span>
<span class="t" style="top:38.5px;font-size:15px;line-height:21px;color:#dcdcdc;letter-spacing:-0.02px;left:1683px;">资讯</span>
<span class="t" style="top:38.5px;font-size:15px;line-height:21px;color:#dcdcdc;letter-spacing:-0.01px;left:1728px;">个性化</span>
<span class="t" style="top:38.5px;font-size:15px;line-height:21px;color:#dcdcdc;letter-spacing:-0.01px;left:1789px;">系统工具</span>
<span class="t" style="top:38.5px;font-size:15px;line-height:21px;color:#dcdcdc;letter-spacing:-0.02px;left:1865px;">帮助</span>
<span class="t" style="top:70.5px;font-size:15px;line-height:21px;color:#ffffff;font-weight:300;letter-spacing:-0.01px;left:72px;">生猪链</span>
<span class="t" style="top:70.5px;font-size:15px;line-height:21px;color:#ffffff;font-weight:300;left:119px;">(</span>
<span class="t" style="top:70.5px;font-size:15px;line-height:21px;color:#ffffff;font-weight:300;letter-spacing:-0.01px;left:125px;">文华指数</span>
<span class="t" style="top:70.5px;font-size:15px;line-height:21px;color:#ffffff;transform:scaleX(0.884);transform-origin:0 50%;left:192.5px;">7217</span>
<span class="t" style="top:70.5px;font-size:15px;line-height:21px;color:#ffffff;font-weight:300;left:224px;">)</span>
<span class="t" style="top:70.5px;font-size:15px;line-height:21px;color:#ffffff;font-weight:300;letter-spacing:-1.02px;left:249px;">日线</span>
<span class="t" style="top:92.5px;font-size:15px;line-height:21px;color:#ffff00;font-weight:300;letter-spacing:0.36px;left:108px;">多空方位(0,0,0)</span>
<span class="t" style="top:92.5px;font-size:15px;line-height:21px;color:#ffff00;font-weight:300;letter-spacing:-0.57px;left:239px;">VX量化服务商  LIANGHUAFUWUSHANG</span>
<span class="t" style="top:648.5px;font-size:15px;line-height:21px;color:#ffff00;font-weight:300;letter-spacing:0.32px;left:108px;">副图量能信号(0,0)</span>
<span class="t" style="top:648.5px;font-size:15px;line-height:21px;color:#ffff00;font-weight:300;letter-spacing:-0.57px;left:256px;">VX量化服务商  LIANGHUAFUWUSHANG</span>
<span class="t" style="top:626.5px;font-size:17px;line-height:24px;color:#ffff00;transform:scaleX(0.899);transform-origin:0 50%;left:102.5px;">242</span>
<span class="t" style="top:628px;font-size:15.5px;line-height:22px;color:#ffff00;font-weight:300;left:128.5px;">天</span>
<span class="t" style="top:114px;font-size:14px;line-height:20px;color:#ff3c3c;letter-spacing:0.23px;left:527px;">218.65</span>
<span class="t" style="top:630px;font-size:14px;line-height:20px;color:#00e8ff;letter-spacing:0.43px;left:1378px;">168.77</span>
<span class="t" style="top:99.5px;font-size:25px;line-height:35px;color:#ffff00;font-weight:600;font-family:'Liberation Serif','Noto Serif CJK SC',serif;letter-spacing:0.98px;left:695px;">空头</span>
<span class="t" style="top:399.5px;font-size:25px;line-height:35px;color:#ffff00;font-weight:600;font-family:'Liberation Serif','Noto Serif CJK SC',serif;letter-spacing:0.98px;left:251px;">多头</span>
<span class="t" style="top:307px;font-size:15px;line-height:21px;color:#b0b0b0;font-weight:700;letter-spacing:-0.38px;right:1820.38px;">200.00</span>
<span class="t" style="top:506px;font-size:15px;line-height:21px;color:#b0b0b0;font-weight:700;letter-spacing:-0.38px;right:1820.38px;">180.00</span>
<span class="t" style="top:753px;font-size:15px;line-height:21px;color:#b0b0b0;font-weight:700;letter-spacing:-0.38px;right:1820.38px;">200.00</span>
<span class="t" style="top:854px;font-size:15px;line-height:21px;color:#b0b0b0;font-weight:700;letter-spacing:-0.38px;right:1820.38px;">180.00</span>
<span class="t" style="top:929.5px;font-size:15px;line-height:21px;color:#a4a4a4;letter-spacing:0.05px;left:184.5px;">2024/03/01</span>
<span class="t" style="top:929.5px;font-size:15px;line-height:21px;color:#a4a4a4;letter-spacing:0.05px;left:430.5px;">2024/05/06</span>
<span class="t" style="top:929.5px;font-size:15px;line-height:21px;color:#a4a4a4;letter-spacing:0.05px;left:664.5px;">2024/07/01</span>
<span class="t" style="top:929.5px;font-size:15px;line-height:21px;color:#a4a4a4;letter-spacing:0.05px;left:934.5px;">2024/09/02</span>
<span class="t" style="top:929.5px;font-size:15px;line-height:21px;color:#a4a4a4;letter-spacing:0.17px;left:1156.5px;">2024/11/01</span>
<span class="t" style="top:929.5px;font-size:15px;line-height:21px;color:#a4a4a4;letter-spacing:0.05px;left:1414.5px;">2025/01/02</span>
<span class="t" style="top:110.5px;font-size:15px;line-height:21px;color:#8a8a8a;left:15px;">分</span>
<span class="t" style="top:129.5px;font-size:15px;line-height:21px;color:#8a8a8a;left:15px;">时</span>
<span class="t" style="top:148.5px;font-size:15px;line-height:21px;color:#8a8a8a;left:15px;">图</span>
<span class="t" style="top:210.5px;font-size:15px;line-height:21px;color:#f0f0f0;transform:scaleX(0.899);transform-origin:0 50%;left:18px;">K</span>
<span class="t" style="top:230.5px;font-size:15px;line-height:21px;color:#f0f0f0;left:15px;">线</span>
<span class="t" style="top:249.5px;font-size:15px;line-height:21px;color:#f0f0f0;left:15px;">图</span>
<span class="t" style="top:310.5px;font-size:15px;line-height:21px;color:#8a8a8a;left:15px;">资</span>
<span class="t" style="top:329.5px;font-size:15px;line-height:21px;color:#8a8a8a;left:15px;">讯</span>
<span class="t" style="top:348.5px;font-size:15px;line-height:21px;color:#8a8a8a;left:15px;">链</span>
<span class="t" style="top:-10.5px;font-size:15px;line-height:21px;color:#8a8a8a;left:0px;left:22px;top:411px;width:0;height:0;line-height:0;transform:rotate(90deg);transform-origin:0 0;">F10</span>
<span class="t" style="top:436.5px;font-size:15px;line-height:21px;color:#8a8a8a;left:15px;">资</span>
<span class="t" style="top:456.5px;font-size:15px;line-height:21px;color:#8a8a8a;left:15px;">料</span>
<span class="t" style="top:73.7px;font-size:27px;line-height:38px;color:#f4f400;letter-spacing:-1.5px;left:1621.5px;">生猪链</span>
<span class="t" style="top:71.5px;font-size:29px;line-height:41px;color:#ffff00;transform:scaleX(0.899);transform-origin:0 50%;left:1716px;">7217</span>
<span class="t" style="top:112px;font-size:17.5px;line-height:24px;color:#ffffff;font-weight:300;letter-spacing:-0.5px;left:1618.7px;">最新</span>
<span class="t" style="top:110.5px;font-size:16.2px;line-height:23px;color:#00ee00;font-weight:700;right:180px;">178.24</span>
<span class="t" style="top:110px;font-size:17.5px;line-height:24px;color:#ffffff;font-weight:300;letter-spacing:-0.5px;left:1759.8px;">涨跌</span>
<span class="t" style="top:110.5px;font-size:16.2px;line-height:23px;color:#00ee00;font-weight:700;right:12.8px;">-0.63/0.35%</span>
<span class="t" style="top:136.5px;font-size:17.5px;line-height:24px;color:#ffffff;font-weight:300;letter-spacing:-0.5px;left:1618.7px;">现手</span>
<span class="t" style="top:137.5px;font-size:16.2px;line-height:23px;color:#f2f200;font-weight:700;right:180px;">415</span>
<span class="t" style="top:136px;font-size:17.5px;line-height:24px;color:#ffffff;font-weight:300;letter-spacing:-0.5px;left:1759.8px;">速涨</span>
<span class="t" style="top:137.5px;font-size:16.2px;line-height:23px;color:#ff3c3c;font-weight:700;right:12.8px;">0.02%</span>
<span class="t" style="top:162.5px;font-size:17.5px;line-height:24px;color:#ffffff;font-weight:300;letter-spacing:-0.5px;left:1618.7px;">总量</span>
<span class="t" style="top:163.5px;font-size:16.2px;line-height:23px;color:#f2f200;font-weight:700;right:180px;">2321982</span>
<span class="t" style="top:162px;font-size:17.5px;line-height:24px;color:#ffffff;font-weight:300;letter-spacing:-0.5px;left:1759.8px;">开盘</span>
<span class="t" style="top:163.5px;font-size:16.2px;line-height:23px;color:#00ee00;font-weight:700;right:12.8px;">178.76</span>
<span class="t" style="top:188.5px;font-size:17.5px;line-height:24px;color:#ffffff;font-weight:300;letter-spacing:-0.5px;left:1618.7px;">持仓</span>
<span class="t" style="top:189.5px;font-size:16.2px;line-height:23px;color:#f2f200;font-weight:700;right:180px;">6467889</span>
<span class="t" style="top:188px;font-size:17.5px;line-height:24px;color:#ffffff;font-weight:300;letter-spacing:-0.5px;left:1759.8px;">最高</span>
<span class="t" style="top:189.5px;font-size:16.2px;line-height:23px;color:#00ee00;font-weight:700;right:12.8px;">178.86</span>
<span class="t" style="top:214.5px;font-size:17.5px;line-height:24px;color:#ffffff;font-weight:300;letter-spacing:-0.5px;left:1618.7px;">日增</span>
<span class="t" style="top:215.5px;font-size:16.2px;line-height:23px;color:#f2f200;font-weight:700;right:180px;">-141080</span>
<span class="t" style="top:214px;font-size:17.5px;line-height:24px;color:#ffffff;font-weight:300;letter-spacing:-0.5px;left:1759.8px;">最低</span>
<span class="t" style="top:215.5px;font-size:16.2px;line-height:23px;color:#00ee00;font-weight:700;right:12.8px;">177.81</span>
<span class="t" style="top:240.5px;font-size:17.5px;line-height:24px;color:#ffffff;font-weight:300;letter-spacing:-0.5px;left:1618.7px;">外盘</span>
<span class="t" style="top:241.5px;font-size:16.2px;line-height:23px;color:#f2f200;font-weight:700;right:180px;">1124089</span>
<span class="t" style="top:240px;font-size:17.5px;line-height:24px;color:#ffffff;font-weight:300;letter-spacing:-0.25px;left:1759.8px;">结算价</span>
<span class="t" style="top:241.5px;font-size:16.2px;line-height:23px;color:#00ee00;font-weight:700;right:12.8px;">178.27</span>
<span class="t" style="top:266.5px;font-size:17.5px;line-height:24px;color:#ffffff;font-weight:300;letter-spacing:-0.5px;left:1618.7px;">比例</span>
<span class="t" style="top:267.5px;font-size:16.2px;line-height:23px;color:#f2f200;font-weight:700;right:180px;">48.4%</span>
<span class="t" style="top:266px;font-size:17.5px;line-height:24px;color:#ffffff;font-weight:300;letter-spacing:-0.5px;left:1759.8px;">昨收</span>
<span class="t" style="top:267.5px;font-size:16.2px;line-height:23px;color:#ffffff;font-weight:700;right:12.8px;">178.68</span>
<span class="t" style="top:292.5px;font-size:17.5px;line-height:24px;color:#ffffff;font-weight:300;letter-spacing:-0.5px;left:1618.7px;">内盘</span>
<span class="t" style="top:293.5px;font-size:16.2px;line-height:23px;color:#f2f200;font-weight:700;right:180px;">1198061</span>
<span class="t" style="top:292px;font-size:17.5px;line-height:24px;color:#ffffff;font-weight:300;letter-spacing:-0.5px;left:1759.8px;">昨结</span>
<span class="t" style="top:293.5px;font-size:16.2px;line-height:23px;color:#ffffff;font-weight:700;right:12.8px;">178.87</span>
<span class="t" style="top:318.5px;font-size:17.5px;line-height:24px;color:#ffffff;font-weight:300;letter-spacing:-0.5px;left:1618.7px;">比例</span>
<span class="t" style="top:319.5px;font-size:16.2px;line-height:23px;color:#f2f200;font-weight:700;right:180px;">51.6%</span>
<span class="t" style="top:318px;font-size:17.5px;line-height:24px;color:#ffffff;font-weight:300;letter-spacing:-0.5px;left:1759.8px;">涨停</span>
<span class="t" style="top:319.5px;font-size:16.2px;line-height:23px;color:#ff3c3c;font-weight:700;right:12.8px;">-----</span>
<span class="t" style="top:344.5px;font-size:17.5px;line-height:24px;color:#ffffff;font-weight:300;letter-spacing:-0.5px;left:1618.7px;">杠杆</span>
<span class="t" style="top:345.5px;font-size:16.2px;line-height:23px;color:#f2f200;font-weight:700;right:180px;">-----</span>
<span class="t" style="top:344px;font-size:17.5px;line-height:24px;color:#ffffff;font-weight:300;letter-spacing:-0.5px;left:1759.8px;">跌停</span>
<span class="t" style="top:345.5px;font-size:16.2px;line-height:23px;color:#00ee00;font-weight:700;right:12.8px;">-----</span>
<span class="t" style="top:384px;font-size:17px;line-height:24px;color:#8c8c8c;font-weight:300;left:1619px;">名称</span>
<span class="t" style="top:384px;font-size:17px;line-height:24px;color:#8c8c8c;font-weight:300;right:152px;">涨幅</span>
<span class="t" style="top:384px;font-size:17px;line-height:24px;color:#8c8c8c;font-weight:300;letter-spacing:-1px;right:79px;">日增仓</span>
<span class="t" style="top:384px;font-size:17px;line-height:24px;color:#8c8c8c;font-weight:300;right:4.5px;">贡献度</span>
<span class="t" style="top:413px;font-size:17px;line-height:24px;color:#ffffff;font-weight:300;letter-spacing:-0.17px;left:1619px;">豆粕加权</span>
<span class="t" style="top:412.5px;font-size:16.5px;line-height:23px;color:#00ee00;font-weight:700;right:152.7px;">-0.17%</span>
<span class="t" style="top:413.5px;font-size:16px;line-height:22px;color:#ffff00;font-weight:300;right:79.5px;">万</span>
<span class="t" style="top:412.5px;font-size:16.5px;line-height:23px;color:#f2f200;font-weight:700;right:95.5px;">-9</span>
<span class="t" style="top:412.5px;font-size:16.5px;line-height:23px;color:#00ee00;font-weight:700;right:5px;">-0.08</span>
<span class="t" style="top:439px;font-size:17px;line-height:24px;color:#ffffff;font-weight:300;letter-spacing:-0.17px;left:1619px;">生猪加权</span>
<span class="t" style="top:438.5px;font-size:16.5px;line-height:23px;color:#00ee00;font-weight:700;right:152.7px;">-0.30%</span>
<span class="t" style="top:438.5px;font-size:16.5px;line-height:23px;color:#f2f200;font-weight:700;right:78.5px;">-9644</span>
<span class="t" style="top:438.5px;font-size:16.5px;line-height:23px;color:#00ee00;font-weight:700;right:5px;">-0.18</span>
<span class="t" style="top:465px;font-size:17px;line-height:24px;color:#ffffff;font-weight:300;letter-spacing:-0.17px;left:1619px;">玉米加权</span>
<span class="t" style="top:464.5px;font-size:16.5px;line-height:23px;color:#00ee00;font-weight:700;right:152.7px;">-0.53%</span>
<span class="t" style="top:465.5px;font-size:16px;line-height:22px;color:#ffff00;font-weight:300;right:79.5px;">万</span>
<span class="t" style="top:464.5px;font-size:16.5px;line-height:23px;color:#f2f200;font-weight:700;right:95.5px;">-4</span>
<span class="t" style="top:464.5px;font-size:16.5px;line-height:23px;color:#00ee00;font-weight:700;right:5px;">-0.39</span>
<span class="t" style="top:927px;font-size:14px;line-height:20px;color:#9a9a9a;font-weight:300;letter-spacing:0.5px;left:1645px;">贡献度</span>
<span class="t" style="top:927px;font-size:14px;line-height:20px;color:#9a9a9a;font-weight:300;left:1717px;">领涨</span>
<span class="t" style="top:927px;font-size:14px;line-height:20px;color:#9a9a9a;font-weight:300;left:1773px;">领跌</span>
<span class="t" style="top:956.5px;font-size:15px;line-height:21px;color:#d2d2d2;letter-spacing:-0.01px;left:43px;">小编导读</span>
<span class="t" style="top:956.5px;font-size:15px;line-height:21px;color:#d2d2d2;letter-spacing:-0.01px;left:117px;">我的合约</span>
<span class="t" style="top:956.5px;font-size:15px;line-height:21px;color:#d2d2d2;left:191px;">主力合约排名</span>
<span class="t" style="top:956.5px;font-size:15px;line-height:21px;color:#f08228;left:295px;">商品分类指数</span>
<span class="t" style="top:956.5px;font-size:15px;line-height:21px;color:#d2d2d2;letter-spacing:-0.01px;left:399px;">国内股票</span>
<span class="t" style="top:959px;font-size:16px;line-height:22px;color:#f08228;letter-spacing:0.33px;left:1840px;">在线客服</span>
<span class="t" style="top:992px;font-size:14px;line-height:20px;color:#e63232;letter-spacing:2px;left:36px;">上证指数</span>
<span class="t" style="top:992.5px;font-size:15px;line-height:21px;color:#e63232;font-weight:700;font-family:'Liberation Mono','Noto Sans Mono CJK SC',monospace;letter-spacing:-0.17px;left:107.5px;">3252.63</span>
<span class="t" style="top:992.5px;font-size:15px;line-height:21px;color:#e63232;font-weight:700;font-family:'Liberation Mono','Noto Sans Mono CJK SC',monospace;letter-spacing:-0.16px;left:179.4px;">+22.46</span>
<span class="t" style="top:992px;font-size:14px;line-height:20px;color:#32c832;letter-spacing:2px;left:251.6px;">文华商品</span>
<span class="t" style="top:992.5px;font-size:15px;line-height:21px;color:#32c832;font-weight:700;font-family:'Liberation Mono','Noto Sans Mono CJK SC',monospace;letter-spacing:-0.3px;left:323.7px;">171.08</span>
<span class="t" style="top:992.5px;font-size:15px;line-height:21px;color:#32c832;font-weight:700;font-family:'Liberation Mono','Noto Sans Mono CJK SC',monospace;letter-spacing:-0.13px;left:385.7px;">-0.13</span>
<span class="t" style="top:991.5px;font-size:15px;line-height:21px;color:#e6e6e6;letter-spacing:-0.01px;left:1590px;">期货户</span>
<span class="t" style="top:991.5px;font-size:15px;line-height:21px;color:#e6e6e6;letter-spacing:-0.01px;left:1661px;">外盘户</span>
<span class="t" style="top:991px;font-size:14px;line-height:20px;color:#ff2020;font-weight:700;letter-spacing:4.67px;left:1724px;">--</span>
<span class="t" style="top:992.5px;font-size:15px;line-height:21px;color:#e6e6e6;letter-spacing:0.01px;left:1806px;">15:42:09 - wh</span>
<span class="t" style="top:807px;font-size:14px;line-height:20px;color:#ffff00;left:181px;transform:scaleY(1.1);transform-origin:50% 50%;">多</span>
<span class="t" style="top:763px;font-size:14px;line-height:20px;color:#ffff00;left:247px;transform:scaleY(1.1);transform-origin:50% 50%;">多</span>
<span class="t" style="top:714px;font-size:14px;line-height:20px;color:#ffff00;left:469px;transform:scaleY(1.1);transform-origin:50% 50%;">多</span>
<span class="t" style="top:684px;font-size:14px;line-height:20px;color:#ffff00;left:535px;transform:scaleY(1.1);transform-origin:50% 50%;">多</span>
<span class="t" style="top:884.5px;font-size:14px;line-height:20px;color:#ffff00;left:1495px;transform:scaleY(1.1);transform-origin:50% 50%;">多</span>
<span class="t" style="top:709px;font-size:15px;line-height:21px;color:#00ff00;left:637px;transform:scaleY(1.1);transform-origin:50% 50%;">空</span>
<span class="t" style="top:716.5px;font-size:15px;line-height:21px;color:#00ff00;left:661px;transform:scaleY(1.1);transform-origin:50% 50%;">空</span>
<span class="t" style="top:727px;font-size:15px;line-height:21px;color:#00ff00;left:733px;transform:scaleY(1.1);transform-origin:50% 50%;">空</span>
<span class="t" style="top:790px;font-size:15px;line-height:21px;color:#00ff00;left:997px;transform:scaleY(1.1);transform-origin:50% 50%;">空</span>
<span class="t" style="top:823px;font-size:15px;line-height:21px;color:#00ff00;left:1045px;transform:scaleY(1.1);transform-origin:50% 50%;">空</span>
<span class="t" style="top:821px;font-size:15px;line-height:21px;color:#00ff00;left:1057px;transform:scaleY(1.1);transform-origin:50% 50%;">空</span>
<span class="t" style="top:853px;font-size:15px;line-height:21px;color:#00ff00;left:1249px;transform:scaleY(1.1);transform-origin:50% 50%;">空</span>
<span class="t" style="top:853px;font-size:15px;line-height:21px;color:#00ff00;left:1279px;transform:scaleY(1.1);transform-origin:50% 50%;">空</span>
<span class="t" style="top:858px;font-size:15px;line-height:21px;color:#00ff00;left:1303px;transform:scaleY(1.1);transform-origin:50% 50%;">空</span>
<span class="t" style="top:36.5px;font-size:21px;line-height:29px;color:#cdcdcd;transform:scaleX(0.428);transform-origin:0 50%;left:355px;">1</span>
<span class="t" style="top:36.5px;font-size:21px;line-height:29px;color:#cdcdcd;transform:scaleX(0.856);transform-origin:0 50%;left:391px;">3</span>
<span class="t" style="top:36.5px;font-size:21px;line-height:29px;color:#cdcdcd;transform:scaleX(0.856);transform-origin:0 50%;left:428px;">5</span>
<span class="t" style="top:36.5px;font-size:21px;line-height:29px;color:#cdcdcd;transform:scaleX(0.685);transform-origin:0 50%;left:461px;">15</span>
<span class="t" style="top:36.5px;font-size:21px;line-height:29px;color:#cdcdcd;transform:scaleX(0.856);transform-origin:0 50%;left:496px;">30</span>
<span class="t" style="top:36.5px;font-size:21px;line-height:29px;color:#cdcdcd;transform:scaleX(0.728);transform-origin:0 50%;left:535px;">1h</span>
<span class="t" style="top:38.5px;font-size:19px;line-height:27px;color:#cdcdcd;font-weight:300;left:570px;">日</span>
<span class="t" style="top:38.5px;font-size:19px;line-height:27px;color:#cdcdcd;font-weight:300;left:607px;">周</span>
<span class="t" style="top:38.5px;font-size:19px;line-height:27px;color:#cdcdcd;font-weight:300;left:644px;">月</span>
<span class="t" style="top:38.5px;font-size:19px;line-height:27px;color:#cdcdcd;font-weight:300;left:681px;">自</span>
<span class="t" style="top:43.5px;font-size:12px;line-height:17px;color:#cdcdcd;left:207.5px;">户</span>
<span class="t" style="top:38.5px;font-size:15px;line-height:21px;color:#cdcdcd;font-weight:300;left:240px;">单</span>
</body></html>
